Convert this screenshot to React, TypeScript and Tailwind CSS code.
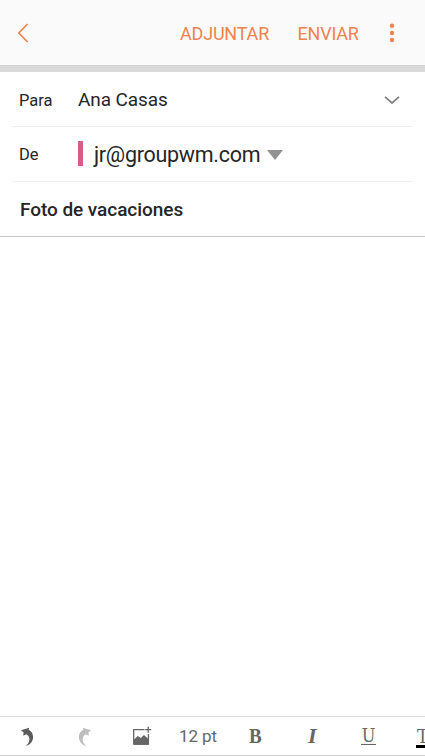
import React from "react";

function BackIcon() {
  return (
    <svg width="12" height="20" viewBox="0 0 12 20" fill="none" stroke="#ee8250" strokeWidth="1.700">
      <path d="M10.600 1 L1.800 10 L10.600 19" />
    </svg>
  );
}

function MoreIcon() {
  return (
    <svg width="6" height="20" viewBox="0 0 6 20" fill="#ee8250">
      <circle cx="3" cy="2.700" r="2.200" />
      <circle cx="3" cy="10" r="2.200" />
      <circle cx="3" cy="17" r="2.200" />
    </svg>
  );
}

function CurvedArrow() {
  return (
    <svg width="13" height="20" viewBox="0 0 13 20" fill="currentColor">
      <path d="M0 3.200 L8.200 0.800 L7.600 2.800 C10.800 4.200 12.400 7.500 12 11 C11.500 15 9 18 5 18.800 C7.600 16.500 9 13.500 8.200 10.800 C7.800 9.300 6.800 8.200 5.300 7.300 L2.200 8.800 L2.600 5.600 Z" />
    </svg>
  );
}

function ImageAddIcon() {
  return (
    <svg width="19" height="20" viewBox="0 0 19 20" fill="none" stroke="#666" strokeWidth="1.300">
      <path d="M11.500 3.600 H0.700 V18.200 H15.400 V8" />
      <path d="M15.200 0.700 V6.700 M12.200 3.700 H18.200" />
      <path fill="#666" stroke="none" d="M1 13.500 L4.800 10 L7.800 12 L11 9 L15.400 13 V18.700 H1 Z" />
    </svg>
  );
}

export default function App() {
  return (
    <div className="flex h-[756px] w-[425px] flex-col overflow-hidden bg-white font-['Roboto',sans-serif] text-[#262626]">
      <header className="flex h-[65px] shrink-0 items-center bg-[#fafafa] pt-px text-[18px] text-[#ee8250]">
        <button className="ml-[17px] mr-auto"><BackIcon /></button>
        <button className="w-[89px] whitespace-nowrap text-left tracking-[-0.200px]">ADJUNTAR</button>
        <button className="ml-[28.500px] w-[61.500px] whitespace-nowrap text-left tracking-[-0.200px]">ENVIAR</button>
        <button className="ml-[30px] mr-[30px]"><MoreIcon /></button>
      </header>
      <div className="h-[7px] shrink-0 border-t border-[#d0d0d0] bg-[#d9d9d9]" />

      <main className="flex min-h-0 flex-1 flex-col">
        <div className="mx-3 flex h-[55px] shrink-0 items-center border-b border-[#eee] pl-[7px] pt-[2px]">
          <span className="w-[59px] pt-[2px] text-[16.500px]">Para</span>
          <span className="text-[19px] tracking-[-0.100px]">Ana Casas</span>
          <svg className="ml-auto mr-[13px]" width="16" height="10" viewBox="0 0 16 10" fill="none" stroke="#808080" strokeWidth="1.700">
            <path d="M1 1.800 L8 8 L15 1.800" />
          </svg>
        </div>
        <div className="mx-3 flex h-[55px] shrink-0 items-center border-b border-[#eee] pl-[7px]">
          <span className="w-[59px] pt-[2px] text-[16.500px]">De</span>
          <span className="mb-[2px] h-[25px] w-[5px] bg-[#d95c86]" />
          <span className="ml-[11px] w-[173px] whitespace-nowrap pt-[2px] text-[21.500px] tracking-[-0.280px]">jr@groupwm.com</span>
          <svg className="mt-[2px]" width="16" height="10" viewBox="0 0 16 10" fill="#929292">
            <path d="M0 0 H16 L8 10 Z" />
          </svg>
        </div>
        <div className="flex h-[55px] shrink-0 items-center border-b border-[#c8c8c8] pl-5 pt-[2px]">
          <span className="text-[19px] font-medium tracking-[-0.050px]">Foto de vacaciones</span>
        </div>
        <div className="flex-1" />
      </main>

      <footer className="flex h-10 shrink-0 items-center overflow-hidden border-b border-t border-b-[#ccc] border-t-[#ddd] pl-[21px] pt-px text-[#666]">
        <span className="w-[57px] shrink-0 text-[#5c5c5c]"><CurvedArrow /></span>
        <span className="w-[55px] shrink-0 text-[#bdbdbd]"><span className="block w-[13px] -scale-x-100"><CurvedArrow /></span></span>
        <span className="mb-[2px] w-[46px] shrink-0"><ImageAddIcon /></span>
        <span className="w-[70px] shrink-0 whitespace-nowrap text-[17px] tracking-[-0.100px]">12 pt</span>
        <span className="mb-[2px] w-[59px] shrink-0 origin-left scale-x-[0.860] font-['Liberation_Serif',serif] text-[22px] font-bold leading-none">B</span>
        <span className="mb-[2px] w-[53px] shrink-0 font-['Liberation_Serif',serif] text-[22px] font-bold italic leading-none">I</span>
        <span className="mb-px mr-[40px] flex h-[17px] w-[15px] shrink-0 items-center justify-center border-b border-[#666] font-['DejaVu_Serif_Condensed','DejaVu_Serif',serif] text-[18px] leading-none">U</span>
        <span className="mt-px flex h-[21px] w-6 shrink-0 border-b-[3px] border-black pl-px font-['DejaVu_Serif_Condensed','DejaVu_Serif',serif] text-[19px] leading-none">T</span>
      </footer>
    </div>
  );
}
